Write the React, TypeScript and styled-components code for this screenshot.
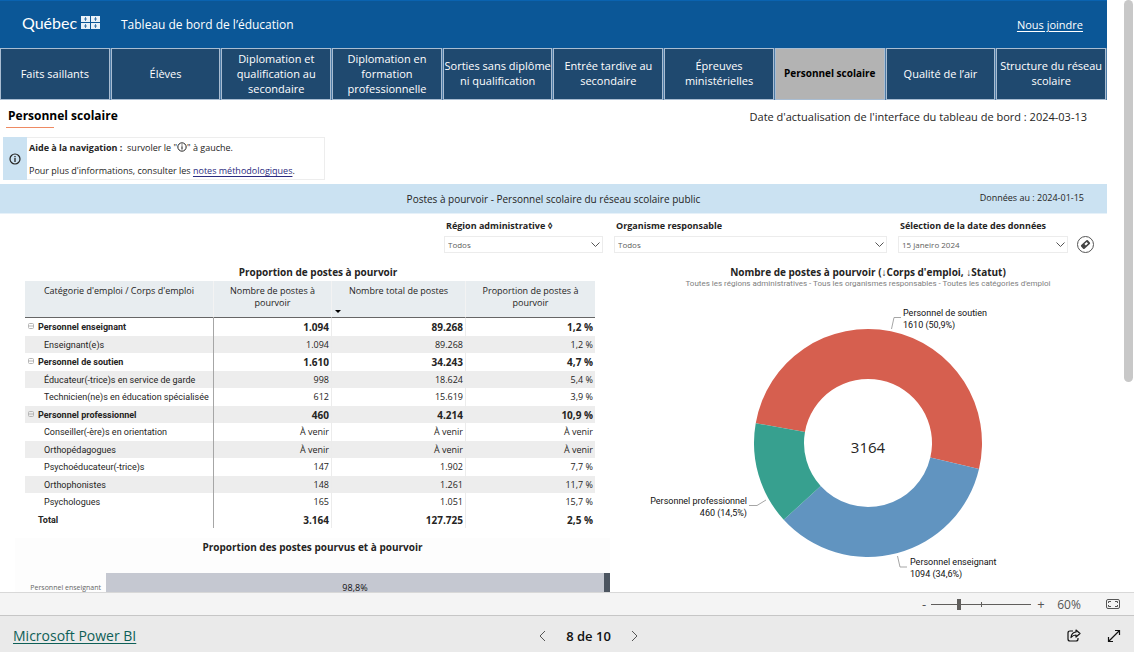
import React from 'react';
import styled, { createGlobalStyle, css } from 'styled-components';

const compact = 'Roboto, "Open Sans", sans-serif';

const GlobalStyle = createGlobalStyle`
  *, *::before, *::after { box-sizing: border-box; }
  body { margin: 0; background: #fff; }
  body, button, select, input { font-family: "Open Sans", "Noto Sans", sans-serif; }
  button { padding: 0; border: 0; background: none; color: inherit; cursor: pointer; }
`;

const Viewer = styled.div`
  display: flex;
  flex-direction: column;
  height: 100vh;
  color: #252423;
  font-size: 9px;
`;

const Viewport = styled.div`
  flex: 1;
  min-height: 0;
  display: flex;
  align-items: flex-start;
  overflow: hidden;
`;

const Report = styled.main`
  flex: 1;
  min-width: 0;
`;

const Gutter = styled.div`
  width: 27px;
  height: 100%;
  padding-left: 17px;
`;

const ScrollThumb = styled.div`
  width: 9px;
  height: 64.5%;
  border-radius: 5px;
  background: #c8c8c8;
`;

const Header = styled.header`
  display: flex;
  align-items: center;
  height: 48px;
  padding: 0 24px 0 22px;
  border-top: 1px solid #0a63b0;
  background: #0b5797;
  color: #fff;
`;

const Logo = styled.svg`
  flex: none;
  margin: 0 20px 4px 0;
`;

const AppTitle = styled.h1`
  flex: 1;
  margin: 0;
  padding-bottom: 1px;
  font-size: 12px;
  font-weight: 400;
`;

const ContactLink = styled.a`
  color: #fff;
  font-size: 11px;
  text-underline-offset: 2px;
`;

const Tabs = styled.nav`
  display: grid;
  grid-template-columns: repeat(10, minmax(0, 1fr));
  gap: 1px;
  height: 52px;
  padding-right: 1px;
  background: #4d7ba6;
`;

const Tab = styled.button<{ $active?: boolean }>`
  padding-bottom: 2px;
  border: 1px solid #a9bdd2;
  background: #1f496f;
  color: #fff;
  font-size: 11px;
  line-height: 15px;
  ${p => p.$active && css`
    background: #b3b3b3;
    color: #000;
    font-size: 10px;
    font-weight: 700;
  `}
`;

const TitleRow = styled.div`
  display: flex;
  justify-content: space-between;
  align-items: flex-start;
  height: 37px;
  padding: 6px 20px 0 6px;
`;

const PageTitle = styled.h2`
  margin: 0;
  padding-left: 2px;
  color: #000;
  font-size: 12px;
  line-height: 19px;
  &::after {
    content: "";
    display: block;
    width: 48px;
    height: 1px;
    margin: 2px 0 0 -2px;
    background: #ee8a63;
  }
`;

const Updated = styled.p`
  margin: 0;
  font-size: 11px;
  line-height: 22px;
`;

const Help = styled.section`
  display: flex;
  width: 322px;
  height: 43px;
  margin: 0 0 4px 3px;
  border: 1px solid #ededed;
  border-left: 0;
`;

const HelpIcon = styled.div`
  display: grid;
  place-items: center;
  width: 24px;
  margin: -1px 0;
  background: #cbe2f2;
`;

const HelpText = styled.div`
  padding: 2px;
  line-height: 16px;
  p { margin: 0 0 7px; }
  a { color: #2b2b80; text-underline-offset: 2px; }
  svg { vertical-align: -1px; }
`;

const Banner = styled.div`
  display: grid;
  grid-template-columns: 1fr auto 1fr;
  align-items: center;
  height: 30px;
  padding: 0 23px;
  border-bottom: 1px solid #e6f1f9;
  background: #cbe2f2;
  font-size: 10px;
`;

const BannerTitle = styled.span`
  grid-column: 2;
`;

const BannerDate = styled.span`
  padding-bottom: 2px;
  text-align: right;
  font-size: 9px;
`;

const Filters = styled.form`
  display: flex;
  justify-content: flex-end;
  align-items: flex-end;
  gap: 11px;
  height: 39px;
  padding-right: 13px;
`;

const Field = styled.label<{ $w: number }>`
  width: ${p => p.$w}px;
  font-size: 9px;
  font-weight: 700;
`;

const FieldName = styled.span`
  display: block;
  padding-left: 2px;
  line-height: 14px;
  margin-bottom: 3px;
  white-space: nowrap;
`;

const SelectFrame = styled.span`
  display: flex;
  align-items: center;
  height: 17px;
  padding-right: 2px;
  border: 1px solid #ececec;
`;

const Select = styled.select`
  flex: 1;
  min-width: 0;
  padding: 0 3px;
  appearance: none;
  border: 0;
  background: none;
  color: #605e5c;
  font-size: 8px;
`;

const EraserButton = styled.button`
  display: grid;
  place-items: center;
  width: 17px;
  height: 17px;
  margin-left: -2px;
  border: 1px solid #555;
  border-radius: 50%;
`;

const Panels = styled.div`
  display: grid;
  grid-template-columns: 636fr 471fr;
  padding-top: 10px;
`;

const LeftPanel = styled.section``;

const RightPanel = styled.section`
  display: flex;
  flex-direction: column;
  align-items: center;
  padding-right: 7px;
`;

const VisualTitle = styled.h3`
  margin: 0;
  font-size: 10px;
  line-height: 18px;
  font-weight: 700;
  text-align: center;
`;

const Subtitle = styled.p`
  margin: -3px 0 13px;
  color: #808080;
  font-family: ${compact};
  font-size: 8px;
  line-height: 12px;
`;

const MatrixBox = styled.div`
  padding: 0 41px 0 25px;
`;

const Matrix = styled.table`
  width: 100%;
  border-collapse: separate;
  border-spacing: 0;
  table-layout: fixed;
  thead tr { height: 37px; background: #e8edf0; }
  tbody tr:nth-child(odd) { height: 18px; }
  tbody tr:nth-child(even) { height: 17px; background: #ededed; }
  tbody tr:last-child { background: none; }
`;

const ColHead = styled.th<{ $w?: number }>`
  ${p => p.$w && css`width: ${p.$w}px;`}
  position: relative;
  padding: 4px 12px 0;
  border-right: 1px solid #f3f3f3;
  border-bottom: 1px solid #666;
  font-weight: 400;
  line-height: 12px;
  vertical-align: top;
  &:first-child { padding: 4px 0 0; }
  &:last-child { border-right: 0; }
`;

const SortArrow = styled.span`
  position: absolute;
  left: 3px;
  bottom: 4px;
  border: 3px solid transparent;
  border-top-color: #000;
  border-bottom: 0;
`;

const RowHead = styled.th<{ $group: boolean }>`
  padding: 0 0 0 ${p => (p.$group ? 13 : 19)}px;
  border-right: 1px solid #a6a6a6;
  font-family: ${compact};
  font-size: 9px;
  font-weight: ${p => (p.$group ? 700 : 400)};
  line-height: 16px;
  text-align: left;
  white-space: nowrap;
`;

const Toggle = styled.button`
  display: inline-block;
  width: 6px;
  height: 16px;
  margin: 0 4px 0 -10px;
  vertical-align: top;
  svg { display: block; margin-bottom: 2px; }
`;

const Cell = styled.td<{ $bold: boolean }>`
  padding: 0 2px 0 0;
  border-right: 1px solid #ececec;
  font-size: ${p => (p.$bold ? 10 : 9)}px;
  font-weight: ${p => (p.$bold ? 700 : 400)};
  line-height: 16px;
  text-align: right;
  &:last-child { border-right: 0; }
`;

const BarVisual = styled.div`
  height: 120px;
  margin: 10px 26px 0 15px;
  background: #fdfdfd;
`;

const BarRow = styled.div`
  display: grid;
  grid-template-columns: 86px 1fr;
  gap: 5px;
  align-items: center;
  height: 29px;
  margin-top: 17px;
`;

const BarLabel = styled.span`
  color: #666;
  font-size: 7px;
  text-align: right;
`;

const Bar = styled.div`
  display: flex;
  height: 29px;
`;

const BarPart = styled.div<{ $share: number; $color: string }>`
  flex: ${p => p.$share} 1 0;
  background: ${p => p.$color};
  color: #111;
  line-height: 29px;
  text-align: center;
`;

const ZoomBar = styled.div`
  display: flex;
  justify-content: flex-end;
  align-items: center;
  height: 23px;
  padding-right: 14px;
  border-top: 1px solid #d8d8d8;
  background: #f4f4f4;
  color: #555;
`;

const ZoomButton = styled.button`
  width: 14px;
  height: 20px;
  font-size: 13px;
  line-height: 20px;
`;

const ZoomRange = styled.input`
  appearance: none;
  width: 100px;
  height: 12px;
  margin: 0 3px 0 0;
  background:
    linear-gradient(#605e5c, #605e5c) 50% 50% / 1px 5px no-repeat,
    linear-gradient(#605e5c, #605e5c) 0 50% / 100% 1px no-repeat;
  &::-webkit-slider-thumb {
    appearance: none;
    width: 4px;
    height: 11px;
    background: #605e5c;
  }
`;

const ZoomValue = styled.output`
  width: 42px;
  margin-right: 16px;
  font-size: 12px;
  text-align: center;
`;

const IconButton = styled.button`
  display: grid;
  place-items: center;
`;

const Footer = styled.footer`
  display: grid;
  grid-template-columns: 1fr auto 1fr;
  align-items: center;
  height: 37px;
  padding: 3px 13px 0;
  border-top: 1px solid #c6c6c6;
  background: #eaeaea;
  color: #111;
`;

const BrandLink = styled.a`
  justify-self: start;
  color: #0e5f57;
  font-size: 14px;
  text-underline-offset: 2px;
`;

const Pager = styled.div`
  display: flex;
  align-items: center;
  gap: 20px;
  padding-left: 43px;
  font-size: 13px;
  font-weight: 600;
`;

const Actions = styled.div`
  display: flex;
  justify-content: flex-end;
  gap: 26px;
`;

const tabs = [
  'Faits saillants', 'Élèves', 'Diplomation et qualification au secondaire',
  'Diplomation en formation professionnelle', 'Sorties sans diplôme ni qualification',
  'Entrée tardive au secondaire', 'Épreuves ministérielles', 'Personnel scolaire',
  'Qualité de l’air', 'Structure du réseau scolaire',
];

type Row = { name: string; kind: 'group' | 'item' | 'total'; values: string[] };
const rows: Row[] = [
  { name: 'Personnel enseignant', kind: 'group', values: ['1.094', '89.268', '1,2 %'] },
  { name: 'Enseignant(e)s', kind: 'item', values: ['1.094', '89.268', '1,2 %'] },
  { name: 'Personnel de soutien', kind: 'group', values: ['1.610', '34.243', '4,7 %'] },
  { name: 'Éducateur(-trice)s en service de garde', kind: 'item', values: ['998', '18.624', '5,4 %'] },
  { name: 'Technicien(ne)s en éducation spécialisée', kind: 'item', values: ['612', '15.619', '3,9 %'] },
  { name: 'Personnel professionnel', kind: 'group', values: ['460', '4.214', '10,9 %'] },
  { name: 'Conseiller(-ère)s en orientation', kind: 'item', values: ['À venir', 'À venir', 'À venir'] },
  { name: 'Orthopédagogues', kind: 'item', values: ['À venir', 'À venir', 'À venir'] },
  { name: 'Psychoéducateur(-trice)s', kind: 'item', values: ['147', '1.902', '7,7 %'] },
  { name: 'Orthophonistes', kind: 'item', values: ['148', '1.261', '11,7 %'] },
  { name: 'Psychologues', kind: 'item', values: ['165', '1.051', '15,7 %'] },
  { name: 'Total', kind: 'total', values: ['3.164', '127.725', '2,5 %'] },
];

const slices = [
  { value: 1610, color: '#d65f4f' },
  { value: 1094, color: '#6194c0' },
  { value: 460, color: '#37a08f' },
];

function point(angle: number, radius: number) {
  const a = (angle * Math.PI) / 180;
  return `${(Math.sin(a) * radius).toFixed(2)} ${(-Math.cos(a) * radius).toFixed(2)}`;
}

function Donut() {
  const outer = 114;
  const inner = 64;
  const total = slices.reduce((sum, s) => sum + s.value, 0);
  let angle = -80;
  return (
    <svg width="440" height="280" viewBox="-220 -140 440 280" role="img" aria-label="Nombre de postes à pourvoir">
      {slices.map(s => {
        const start = angle;
        const end = start + (s.value / total) * 360;
        angle = end;
        const large = end - start > 180 ? 1 : 0;
        return (
          <path
            key={s.color}
            fill={s.color}
            d={`M${point(start, outer)}A${outer} ${outer} 0 ${large} 1 ${point(end, outer)}L${point(end, inner)}A${inner} ${inner} 0 ${large} 0 ${point(start, inner)}Z`}
          />
        );
      })}
      <g fill="none" stroke="#a6a6a6">
        <path d="M23.500 -114L26 -125.500H33" />
        <path d="M29.500 113L32 124H39" />
        <path d="M-102 57L-111 62.500H-119" />
      </g>
      <g fill="#111" fontSize="9" fontFamily={compact}>
        <text x="35" y="-127">Personnel de soutien</text>
        <text x="35" y="-115">1610 (50,9%)</text>
        <text x="42" y="122">Personnel enseignant</text>
        <text x="42" y="134">1094 (34,6%)</text>
        <text x="-121" y="61" textAnchor="end">Personnel professionnel</text>
        <text x="-121" y="73" textAnchor="end">460 (14,5%)</text>
      </g>
      <text x="0" y="10" textAnchor="middle" fontSize="15" fill="#252423">3164</text>
    </svg>
  );
}

function InfoIcon({ size }: { size: number }) {
  return (
    <svg width={size} height={size} viewBox="0 0 12 12" fill="none" stroke="#252423" aria-hidden="true">
      <circle cx="6" cy="6" r="5" strokeWidth="1.200" />
      <path d="M6 5v4M6 3v1.200" strokeWidth="1.300" />
    </svg>
  );
}

function Chevron({ d, w, h }: { d: string; w: number; h: number }) {
  return (
    <svg width={w} height={h} viewBox={`0 0 ${w} ${h}`} fill="none" stroke="#555" aria-hidden="true">
      <path d={d} />
    </svg>
  );
}

function FilterField({ name, value, width }: { name: string; value: string; width: number }) {
  return (
    <Field $w={width}>
      <FieldName>{name}</FieldName>
      <SelectFrame>
        <Select defaultValue={value}><option>{value}</option></Select>
        <Chevron w={9} h={6} d="M.5 .5L4.500 4.500L8.500 .5" />
      </SelectFrame>
    </Field>
  );
}

function QuebecLogo() {
  return (
    <Logo width="79" height="24" viewBox="0 0 79 24" role="img" aria-label="Québec">
      <text x="0" y="18" fontFamily="Lato, sans-serif" fontSize="16" fill="#fff">Québec</text>
      {[[59, 5], [69, 5], [59, 12], [69, 12]].map(([x, y]) => (
        <g key={`${x}-${y}`}>
          <rect x={x} y={y} width="9" height="6" fill="#e9f1f8" />
          <path d={`M${x + 4.5} ${y + 1}v4M${x + 3} ${y + 3}h3`} stroke="#0b5797" strokeOpacity=".7" />
        </g>
      ))}
    </Logo>
  );
}

export default function App() {
  return (
    <Viewer>
      <GlobalStyle />
      <Viewport>
        <Report>
          <Header>
            <QuebecLogo />
            <AppTitle>Tableau de bord de l’éducation</AppTitle>
            <ContactLink href="#contact">Nous joindre</ContactLink>
          </Header>
          <Tabs>
            {tabs.map(t => <Tab key={t} $active={t === 'Personnel scolaire'}>{t}</Tab>)}
          </Tabs>
          <TitleRow>
            <PageTitle>Personnel scolaire</PageTitle>
            <Updated>Date d'actualisation de l'interface du tableau de bord : 2024-03-13</Updated>
          </TitleRow>
          <Help>
            <HelpIcon><InfoIcon size={12} /></HelpIcon>
            <HelpText>
              <p><b>Aide à la navigation :</b>&nbsp; survoler le "<InfoIcon size={10} />" à gauche.</p>
              <p>Pour plus d'informations, consulter les <a href="#notes">notes méthodologiques</a>.</p>
            </HelpText>
          </Help>
          <Banner>
            <BannerTitle>Postes à pourvoir - Personnel scolaire du réseau scolaire public</BannerTitle>
            <BannerDate>Données au : 2024-01-15</BannerDate>
          </Banner>
          <Filters>
            <FilterField name="Région administrative ◊" value="Todos" width={159} />
            <FilterField name="Organisme responsable" value="Todos" width={273} />
            <FilterField name="Sélection de la date des données" value="15 janeiro 2024" width={170} />
            <EraserButton type="button" aria-label="Effacer les filtres">
              <svg width="11" height="11" viewBox="0 0 11 11" aria-hidden="true">
                <g transform="rotate(-42 5.500 5.500)">
                  <rect x="1" y="3" width="9" height="5" rx="1" fill="#444" />
                  <rect x="5" y="4.500" width="3" height="2" fill="#fff" />
                </g>
              </svg>
            </EraserButton>
          </Filters>
          <Panels>
            <LeftPanel>
              <VisualTitle>Proportion de postes à pourvoir</VisualTitle>
              <MatrixBox>
                <Matrix>
                  <thead>
                    <tr>
                      <ColHead>Catégorie d'emploi / Corps d'emploi</ColHead>
                      <ColHead $w={118}>Nombre de postes à pourvoir</ColHead>
                      <ColHead $w={134}>Nombre total de postes<SortArrow /></ColHead>
                      <ColHead $w={129}>Proportion de postes à pourvoir</ColHead>
                    </tr>
                  </thead>
                  <tbody>
                    {rows.map(r => (
                      <tr key={r.name}>
                        <RowHead scope="row" $group={r.kind !== 'item'}>
                          {r.kind === 'group' && (
                            <Toggle aria-label={`Réduire ${r.name}`}>
                              <svg width="6" height="6" viewBox="0 0 6 6" fill="none" stroke="#b5b5b5" aria-hidden="true">
                                <rect x=".5" y=".5" width="5" height="5" rx="1" />
                                <path d="M1 3h4" />
                              </svg>
                            </Toggle>
                          )}
                          {r.name}
                        </RowHead>
                        {r.values.map((v, i) => <Cell key={i} $bold={r.kind !== 'item'}>{v}</Cell>)}
                      </tr>
                    ))}
                  </tbody>
                </Matrix>
              </MatrixBox>
              <BarVisual>
                <VisualTitle>Proportion des postes pourvus et à pourvoir</VisualTitle>
                <BarRow>
                  <BarLabel>Personnel enseignant</BarLabel>
                  <Bar>
                    <BarPart $share={98.8} $color="#c5c8d1">98,8%</BarPart>
                    <BarPart $share={1.2} $color="#4c5560" />
                  </Bar>
                </BarRow>
              </BarVisual>
            </LeftPanel>
            <RightPanel>
              <VisualTitle>Nombre de postes à pourvoir (↓Corps d'emploi, ↓Statut)</VisualTitle>
              <Subtitle>Toutes les régions administratives - Tous les organismes responsables - Toutes les catégories d'emploi</Subtitle>
              <Donut />
            </RightPanel>
          </Panels>
        </Report>
        <Gutter><ScrollThumb /></Gutter>
      </Viewport>
      <ZoomBar>
        <ZoomButton aria-label="Zoom arrière">-</ZoomButton>
        <ZoomRange type="range" min={0} max={100} defaultValue={27} aria-label="Zoom" />
        <ZoomButton aria-label="Zoom avant">+</ZoomButton>
        <ZoomValue>60%</ZoomValue>
        <IconButton aria-label="Ajuster à la page">
          <svg width="14" height="10" viewBox="0 0 14 10" fill="none" stroke="#555" aria-hidden="true">
            <rect x=".5" y=".5" width="13" height="9" rx="1.500" />
            <path d="M5 2.500H2.500V4M9 2.500H11.500V4M5 7.500H2.500V6M9 7.500H11.500V6" />
          </svg>
        </IconButton>
      </ZoomBar>
      <Footer>
        <BrandLink href="#powerbi">Microsoft Power BI</BrandLink>
        <Pager>
          <IconButton aria-label="Page précédente"><Chevron w={7} h={12} d="M6 1L1 6L6 11" /></IconButton>
          <span>8 de 10</span>
          <IconButton aria-label="Page suivante"><Chevron w={7} h={12} d="M1 1L6 6L1 11" /></IconButton>
        </Pager>
        <Actions>
          <IconButton aria-label="Partager">
            <svg width="14" height="13" viewBox="0 0 14 13" fill="none" stroke="#111" strokeWidth="1.200" aria-hidden="true">
              <path d="M6 2H3Q1 2 1 4V10Q1 12 3 12H9Q11 12 11 10V9" />
              <path d="M9 1L13 4.500L9 8V6Q6 6 4 8.500Q4.500 3.500 9 3Z" strokeLinejoin="round" />
            </svg>
          </IconButton>
          <IconButton aria-label="Plein écran">
            <svg width="14" height="14" viewBox="0 0 14 14" fill="none" stroke="#111" strokeWidth="1.200" aria-hidden="true">
              <path d="M1.500 12.500L12.500 1.500M8 1.500H12.500V6M1.500 8V12.500H6" />
            </svg>
          </IconButton>
        </Actions>
      </Footer>
    </Viewer>
  );
}
